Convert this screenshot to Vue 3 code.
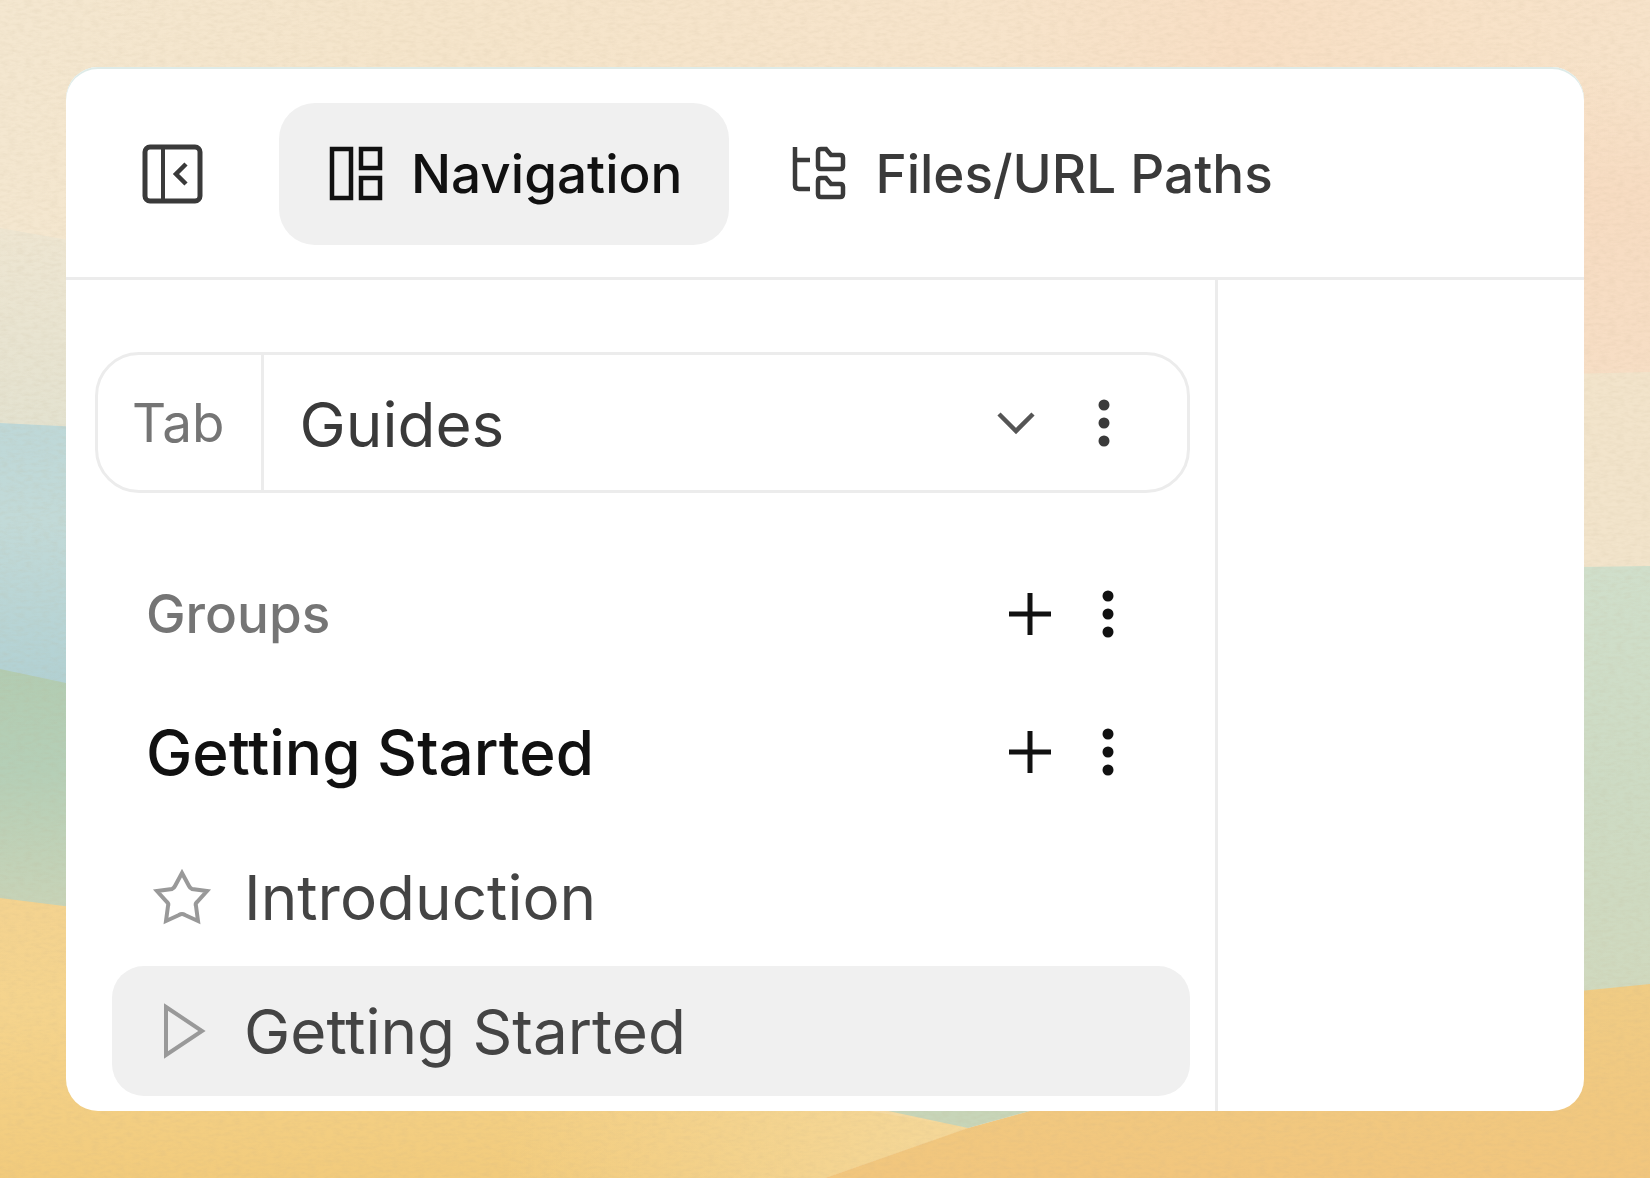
<template>
    <div id="editor">
        <svg class="landscape" viewBox="0 0 1650 1178" preserveAspectRatio="none" aria-hidden="true">
            <defs>
                <linearGradient id="sky" x1="0" y1="0" x2="1" y2="0">
                    <stop offset="0" stop-color="#f4e7d0" />
                    <stop offset="0.25" stop-color="#f5e5cb" />
                    <stop offset="0.6" stop-color="#f7e4cb" />
                    <stop offset="0.75" stop-color="#f8dfc5" />
                    <stop offset="0.88" stop-color="#f8e2c8" />
                    <stop offset="1" stop-color="#f7e3ca" />
                </linearGradient>
                <linearGradient id="peach" x1="0" y1="0" x2="0" y2="1">
                    <stop offset="0" stop-color="#f7dcc2" stop-opacity="0" />
                    <stop offset="0.4" stop-color="#f7dcc2" />
                    <stop offset="1" stop-color="#f7dec5" />
                </linearGradient>
                <linearGradient id="haze" x1="0" y1="0" x2="0" y2="1">
                    <stop offset="0" stop-color="#eee6d2" />
                    <stop offset="1" stop-color="#e3e2d0" />
                </linearGradient>
                <linearGradient id="lake" x1="0" y1="0" x2="0" y2="1">
                    <stop offset="0" stop-color="#bed8d8" />
                    <stop offset="0.35" stop-color="#c2dad8" />
                    <stop offset="1" stop-color="#b0d0d3" />
                </linearGradient>
                <linearGradient id="hill" x1="0" y1="0" x2="0" y2="1">
                    <stop offset="0" stop-color="#b2ccb2" />
                    <stop offset="0.4" stop-color="#b5cfb7" />
                    <stop offset="1" stop-color="#c9d4b8" />
                </linearGradient>
                <linearGradient id="sage" x1="0" y1="0" x2="0" y2="1">
                    <stop offset="0" stop-color="#d0dfcb" />
                    <stop offset="0.5" stop-color="#cddbc4" />
                    <stop offset="1" stop-color="#d0d9be" />
                </linearGradient>
                <linearGradient id="sand" x1="0" y1="0" x2="0" y2="1">
                    <stop offset="0" stop-color="#f4d390" />
                    <stop offset="0.4" stop-color="#f5d48d" />
                    <stop offset="1" stop-color="#f2cb7c" />
                </linearGradient>
                <linearGradient id="dune" x1="0" y1="0" x2="0" y2="1">
                    <stop offset="0" stop-color="#f0cc84" />
                    <stop offset="1" stop-color="#f2c67d" />
                </linearGradient>
                <linearGradient id="glow" x1="0" y1="0" x2="1" y2="0">
                    <stop offset="0" stop-color="#f5d899" stop-opacity="0" />
                    <stop offset="1" stop-color="#f5d899" />
                </linearGradient>
                <filter id="paper" x="0" y="0" width="100%" height="100%">
                    <feTurbulence type="fractalNoise" baseFrequency="0.12 0.3" numOctaves="3" seed="4" />
                    <feColorMatrix values="0 0 0 0 0.5  0 0 0 0 0.4  0 0 0 0 0.25  0.6 0 0 0 -0.22" />
                </filter>
            </defs>
            <rect width="1650" height="1178" fill="url(#sky)" />
            <rect x="1400" y="60" width="250" height="330" fill="url(#peach)" />
            <path d="M1400 378L1650 372V600H1400Z" fill="#f2e4cb" />
            <path d="M0 228L80 242V440H0Z" fill="url(#haze)" />
            <path d="M0 423L80 427V700H0Z" fill="url(#lake)" />
            <path d="M0 669L80 686V920H0Z" fill="url(#hill)" />
            <path d="M1500 568L1650 566V1010H1500Z" fill="url(#sage)" />
            <path d="M0 898L80 908L870 1111L968 1128L825 1178H0Z" fill="url(#sand)" />
            <path d="M500 1100H865L968 1128L825 1178H500Z" fill="url(#glow)" />
            <path d="M825 1178L968 1128L1030 1111L1580 991L1650 984V1178Z" fill="url(#dune)" />
            <path d="M860 1105H1052L968 1128Z" fill="#c7d5b8" />
            <rect width="1650" height="1178" filter="url(#paper)" opacity="0.4" />
        </svg>

        <main class="panel">
            <header class="toolbar">
                <button class="collapse" aria-label="Collapse sidebar">
                    <svg width="64" height="64" viewBox="0 0 64 64" stroke-width="5">
                        <rect x="5" y="5" width="55" height="54" rx="5" />
                        <path d="M23 3V61" stroke-width="4" />
                        <path d="M46 22L36 32L46 42" stroke-width="4.500" />
                    </svg>
                </button>
                <nav class="views">
                    <button
                        v-for="item in views"
                        :key="item.id"
                        class="view"
                        :class="{ active: view === item.id }"
                        @click="view = item.id"
                    >
                        <svg width="60" height="60" viewBox="0 0 60 60" stroke-width="4.500">
                            <path v-for="d in item.icon" :key="d" :d="d" />
                        </svg>
                        {{ item.name }}
                    </button>
                </nav>
            </header>

            <div class="content">
                <aside class="sidebar">
                    <div class="tab-box">
                        <label class="tab-label" for="tab">Tab</label>
                        <select id="tab" v-model="tab">
                            <option>Guides</option>
                        </select>
                        <svg class="chevron" width="44" height="44" viewBox="0 0 44 44" stroke-width="4.500">
                            <path d="M5 13L22 30L39 13" />
                        </svg>
                        <button class="more" aria-label="Tab options">
                            <svg width="48" height="48" viewBox="0 0 48 48">
                                <circle v-for="y in dots" :key="y" cx="24" :cy="y" r="5.500" />
                            </svg>
                        </button>
                    </div>

                    <div v-for="row in rows" :key="row.name" class="group" :class="row.type">
                        <h2>{{ row.name }}</h2>
                        <button :aria-label="'Add to ' + row.name">
                            <svg width="48" height="48" viewBox="0 0 48 48" stroke-width="5">
                                <path d="M3 24H45M24 3V45" />
                            </svg>
                        </button>
                        <button class="more" :aria-label="row.name + ' options'">
                            <svg width="48" height="48" viewBox="0 0 48 48">
                                <circle v-for="y in dots" :key="y" cx="24" :cy="y" r="5.500" />
                            </svg>
                        </button>
                    </div>

                    <ul class="pages">
                        <li v-for="item in pages" :key="item.name">
                            <a href="#" :class="{ active: page === item.name }" @click.prevent="page = item.name">
                                <svg width="60" height="60" viewBox="0 0 60 60" stroke-width="4">
                                    <path :d="item.icon" />
                                </svg>
                                {{ item.name }}
                            </a>
                        </li>
                    </ul>
                </aside>
                <section class="canvas"></section>
            </div>
        </main>
    </div>
</template>

<script setup>
import { ref } from 'vue'

const view = ref('navigation')
const tab = ref('Guides')
const page = ref('Getting Started')

const dots = [6, 24, 42]

const views = [
    {
        id: 'navigation',
        name: 'Navigation',
        icon: ['M6 5H25V54H6Z', 'M35 5H54V24H35Z', 'M35 34H54V54H35Z']
    },
    {
        id: 'files',
        name: 'Files/URL Paths',
        icon: [
            'M5 3V41Q5 45 9 45H20M5 16H20',
            'M28 8Q28 5 31 5H36L41 11H50Q53 11 53 14V22Q53 25 50 25H31Q28 25 28 22Z',
            'M28 37Q28 34 31 34H36L41 40H50Q53 40 53 43V50Q53 53 50 53H31Q28 53 28 50Z'
        ]
    }
]

const rows = [
    { name: 'Groups', type: 'muted' },
    { name: 'Getting Started', type: 'strong' }
]

const pages = [
    {
        name: 'Introduction',
        icon: 'M30 6L37 19Q38 21 40 22L55 24L45 35Q43 37 44 39L46 54L33 48Q30 46 27 48L14 54L16 39Q17 37 15 35L5 24L20 22Q22 21 23 19Z'
    },
    {
        name: 'Getting Started',
        icon: 'M14 6L50 30L14 54Z'
    }
]
</script>

<style>
body {
    margin: 0;
}
</style>

<style scoped>
#editor {
    position: relative;
    box-sizing: border-box;
    min-height: 100vh;
    padding: 67px 66px;
    display: flex;
    font-family: Inter, "Liberation Sans", sans-serif;
    color: #3a3a3a;
}

svg {
    flex: none;
    display: block;
    fill: none;
    stroke: currentColor;
}

.landscape {
    position: absolute;
    top: 0;
    left: 0;
    width: 100%;
    height: 100%;
    stroke: none;
}

.panel {
    position: relative;
    flex: 1;
    display: flex;
    flex-direction: column;
    border-radius: 32px;
    background: #fff;
    box-shadow: inset 0 2px 0 #deebe8;
    overflow: hidden;
}

button {
    padding: 0;
    border: 0;
    background: none;
    font: inherit;
    color: inherit;
    cursor: pointer;
}

.toolbar {
    display: flex;
    align-items: center;
    gap: 75px;
    padding: 36px 74px 32px;
    border-bottom: 3px solid #ececec;
}

.views {
    display: flex;
    gap: 14px;
}

.view {
    display: flex;
    align-items: center;
    gap: 25px;
    height: 142px;
    padding: 0 47px;
    border-radius: 36px;
    font-size: 53px;
    font-weight: 500;
    line-height: 64px;
    white-space: nowrap;
}

.view.active {
    background: #f0f0f0;
    color: #111;
}

.content {
    flex: 1;
    display: grid;
    grid-template-columns: minmax(0, 1152px) 1fr;
}

.sidebar {
    padding: 72px 25px 0 29px;
    border-right: 3px solid #ececec;
}

.tab-box {
    display: flex;
    align-items: center;
    box-sizing: border-box;
    height: 141px;
    margin-bottom: 52px;
    padding-right: 59px;
    border: 3px solid #ececec;
    border-radius: 44px;
}

.tab-label {
    display: flex;
    align-items: center;
    align-self: stretch;
    padding: 0 36px 0 34px;
    border-right: 3px solid #ececec;
    font-size: 53px;
    color: #757575;
}

select {
    flex: 1;
    min-width: 0;
    height: 100%;
    padding: 4px 0 0 36px;
    border: 0;
    appearance: none;
    background: none;
    font: inherit;
    font-size: 62px;
    color: #3a3a3a;
}

.chevron {
    margin-right: 42px;
    color: #555;
}

.more svg {
    fill: currentColor;
    stroke: none;
}

.group {
    display: flex;
    align-items: center;
    gap: 30px;
    height: 138px;
    padding: 0 58px 0 51px;
    color: #111;
}

.group h2 {
    flex: 1;
    margin: 0;
    font-size: 62px;
    font-weight: 500;
}

.muted h2 {
    font-size: 53px;
    color: #757575;
}

.pages {
    display: grid;
    gap: 4px;
    margin: 11px 0 0 17px;
    padding: 0;
    list-style: none;
}

.pages a {
    display: flex;
    align-items: center;
    gap: 32px;
    height: 130px;
    padding: 0 40px;
    border-radius: 32px;
    font-size: 62px;
    color: #444;
    text-decoration: none;
}

.pages a.active {
    background: #f0f0f0;
}

.pages svg {
    color: #999;
}
</style>
